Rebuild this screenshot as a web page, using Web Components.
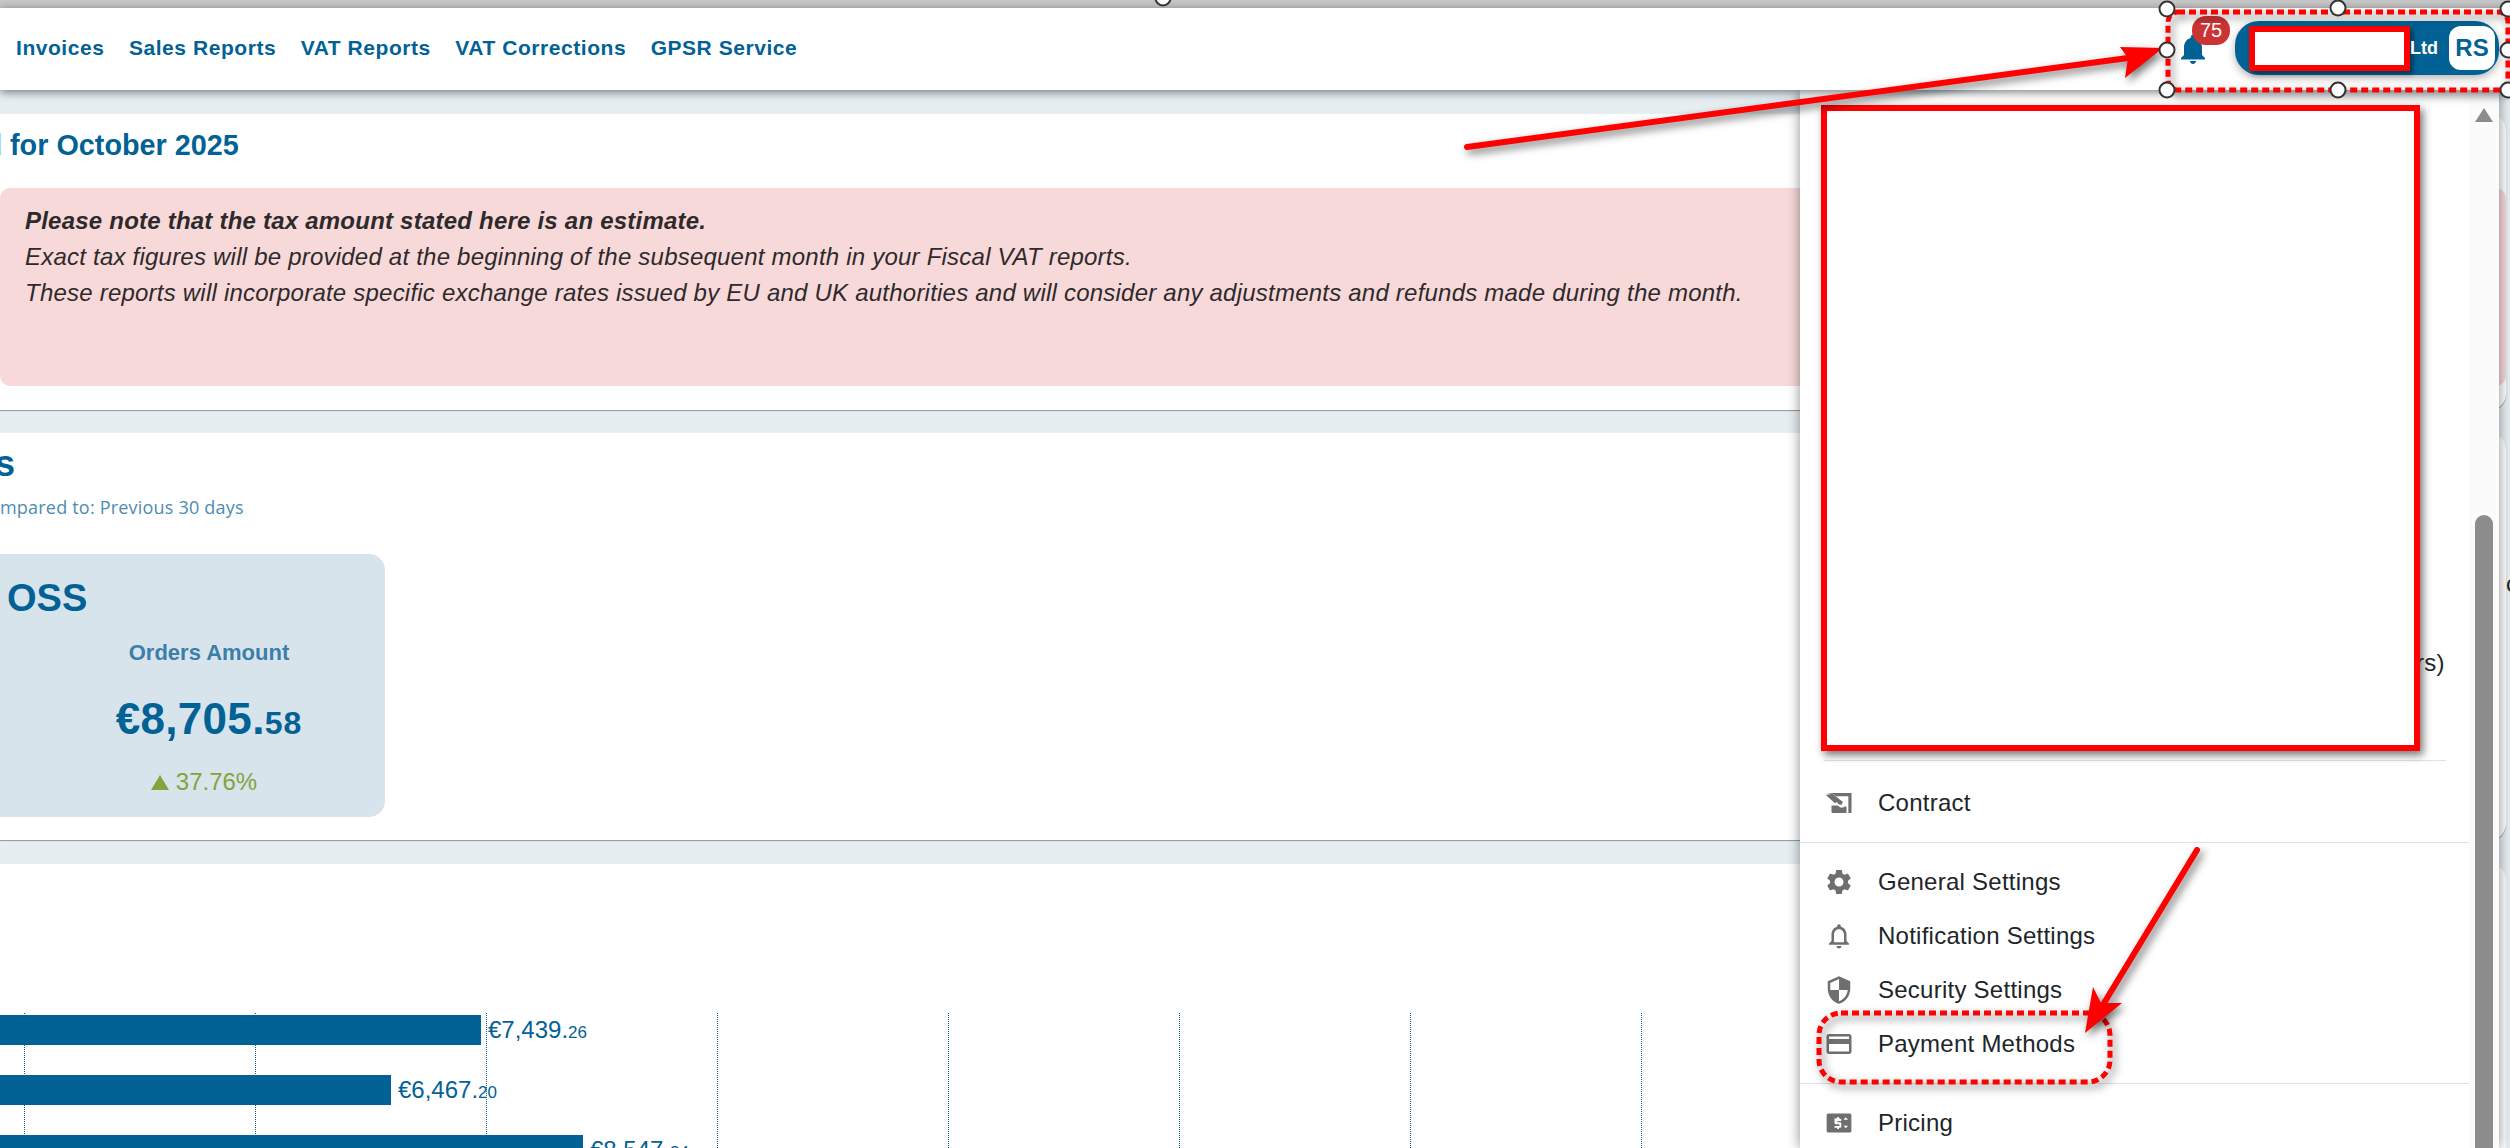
<!DOCTYPE html>
<html lang="en">
<head>
<meta charset="utf-8">
<title>Dashboard</title>
<style>
  html, body { margin: 0; height: 1148px; overflow: hidden; }
  body { position: relative; background: #e6eef2; font-family: "Liberation Sans", Arial, sans-serif; }
  main { display: flex; flex-direction: column; padding: 24px 4px 0 0; }
</style>
</head>
<body>
<top-strip></top-strip>
<app-header>
  <nav-link>Invoices</nav-link>
  <nav-link>Sales Reports</nav-link>
  <nav-link>VAT Reports</nav-link>
  <nav-link>VAT Corrections</nav-link>
  <nav-link>GPSR Service</nav-link>
  <notify-bell slot="right" count="75"></notify-bell>
  <account-pill slot="right" suffix="Ltd" initials="RS"></account-pill>
</app-header>

<main>
  <page-section height="296" gap="23">
    <section-title><span style="margin-left:-15.6px">d</span> for October 2025</section-title>
    <note-box>
      <b>Please note that the tax amount stated here is an estimate.</b>
      <span>Exact tax figures will be provided at the beginning of the subsequent month in your Fiscal VAT reports.</span>
      <span>These reports will incorporate specific exchange rates issued by EU and UK authorities and will consider any adjustments and refunds made during the month.</span>
    </note-box>
  </page-section>

  <page-section height="407" gap="24">
    <section-title><span style="margin-left:-5px;font-size:36px">s</span></section-title>
    <sub-title>mpared to: Previous 30 days</sub-title>
    <stat-card name="OSS" label="Orders Amount" whole="€8,705." cents="58" change="37.76%"></stat-card>
  </page-section>

  <page-section height="284" gap="0" last>
    <bar-chart>
      <bar-row width="481" whole="€7,439." cents="26"></bar-row>
      <bar-row width="391" whole="€6,467." cents="20"></bar-row>
      <bar-row width="583" whole="€8,547." cents="34"></bar-row>
    </bar-chart>
  </page-section>
</main>

<side-menu>
  <menu-group slot="top"><menu-item plain indent="616">rs)</menu-item></menu-group>
  <menu-group>
    <menu-item icon="contract">Contract</menu-item>
  </menu-group>
  <menu-rule></menu-rule>
  <menu-group>
    <menu-item icon="gear">General Settings</menu-item>
    <menu-item icon="bell">Notification Settings</menu-item>
    <menu-item icon="shield">Security Settings</menu-item>
    <menu-item icon="card">Payment Methods</menu-item>
  </menu-group>
  <menu-rule></menu-rule>
  <menu-group>
    <menu-item icon="pricing">Pricing</menu-item>
  </menu-group>
</side-menu>

<markup-layer></markup-layer>

<script>
const BLUE = '#026295';

// material style icons, all on a 24 box
const ICONS = {
  gear: '<path d="M19.14 12.94c.04-.3.06-.61.06-.94 0-.32-.02-.64-.07-.94l2.03-1.58c.18-.14.23-.41.12-.61l-1.92-3.32c-.12-.22-.37-.29-.59-.22l-2.39.96c-.5-.38-1.03-.7-1.62-.94l-.36-2.54c-.04-.24-.24-.41-.48-.41h-3.84c-.24 0-.43.17-.47.41l-.36 2.54c-.59.24-1.13.57-1.62.94l-2.39-.96c-.22-.08-.47 0-.59.22L2.74 8.87c-.12.21-.08.47.12.61l2.03 1.58c-.05.3-.09.63-.09.94s.02.64.07.94l-2.03 1.58c-.18.14-.23.41-.12.61l1.92 3.32c.12.22.37.29.59.22l2.39-.96c.5.38 1.03.7 1.62.94l.36 2.54c.05.24.24.41.48.41h3.84c.24 0 .44-.17.47-.41l.36-2.54c.59-.24 1.13-.56 1.62-.94l2.39.96c.22.08.47 0 .59-.22l1.92-3.32c.12-.22.07-.47-.12-.61l-2.01-1.58zM12 15.6c-1.98 0-3.6-1.62-3.6-3.6s1.62-3.6 3.6-3.6 3.6 1.62 3.6 3.6-1.62 3.6-3.6 3.6z"/>',
  bell: '<path d="M12 22c1.1 0 2-.9 2-2h-4c0 1.1.89 2 2 2zm6-6v-5c0-3.07-1.64-5.64-4.5-6.32V4c0-.83-.67-1.5-1.5-1.5s-1.5.67-1.5 1.5v.68C7.63 5.36 6 7.92 6 11v5l-2 2v1h16v-1l-2-2zm-2 1H8v-6c0-2.48 1.51-4.5 4-4.5s4 2.02 4 4.5v6z"/>',
  shield: '<path d="M12 1L3 5v6c0 5.55 3.84 10.74 9 12 5.16-1.26 9-6.45 9-12V5l-9-4zm0 10.99h7c-.53 4.12-3.28 7.79-7 8.94V12H5V6.3l7-3.11v8.8z"/>',
  card: '<path d="M20 4H4c-1.11 0-1.99.89-1.99 2L2 18c0 1.11.89 2 2 2h16c1.11 0 2-.89 2-2V6c0-1.11-.89-2-2-2zm0 14H4v-6h16v6zm0-10H4V6h16v2z"/>',
  contract: '<path d="M1.500 4H22v15.200a.8.8 0 0 1-.8.8h-1.700V6.500H9.500L7.500 4.800z"/><path d="M1.500 5.500L6.800 4.500l8.400 6.600-1.300 2.400-2.400-.6-1-1.500-2 .6z"/><path d="M6 14h5l2 1.500h2.500l1-1 1.500.5v5H6.800a.8.8 0 0 1-.8-.8z"/>',
  pricing: '<g transform="translate(12 12) scale(.9 .85) translate(-12 -12)"><path fill-rule="evenodd" d="M2.500 3h19A1.500 1.500 0 0 1 23 4.500v15a1.500 1.500 0 0 1-1.500 1.500h-19A1.500 1.500 0 0 1 1 19.500v-15A1.500 1.500 0 0 1 2.500 3zM14 8.500v1.600h-3.400v1.100H13a1 1 0 0 1 1 1v3.300a1 1 0 0 1-1 1h-1v1.200h-1.600v-1.200H8v-1.600h4.400V13.100H9a1 1 0 0 1-1-1V8.500a1 1 0 0 1 1-1h1.400V6.300H12v1.200zM16 9h4l-2-2.500zM16 14.500h4L18 17z"/></g>'
};

class TopStrip extends HTMLElement {
  constructor() {
    super();
    this.attachShadow({ mode: 'open' }).innerHTML = `<style>:host { display: block; height: 8px; background: #c8c8c8; }</style>`;
  }
}

class AppHeader extends HTMLElement {
  constructor() {
    super();
    this.attachShadow({ mode: 'open' }).innerHTML = `
      <style>
        :host { display: flex; align-items: center; position: relative; z-index: 3; height: 82px; padding: 0 11px 0 16px; background: #fff; box-shadow: 0 2px 9px rgba(40,50,60,.65); }
        nav { display: flex; gap: 24.500px; margin-top: -2px; }
        .right { display: flex; align-items: center; gap: 24px; margin-left: auto; }
      </style>
      <nav><slot></slot></nav>
      <div class="right"><slot name="right"></slot></div>`;
  }
}

class NavLink extends HTMLElement {
  constructor() {
    super();
    this.attachShadow({ mode: 'open' }).innerHTML = `
      <style>:host { display: block; font: bold 21px "Liberation Sans", Arial, sans-serif; letter-spacing: .55px; color: ${BLUE}; }</style>
      <slot></slot>`;
  }
}

class NotifyBell extends HTMLElement {
  connectedCallback() {
    this.attachShadow({ mode: 'open' }).innerHTML = `
      <style>
        :host { display: block; position: relative; width: 36px; height: 36px; }
        svg { display: block; fill: ${BLUE}; }
        .badge { position: absolute; left: 17px; top: -15px; width: 38px; height: 29px; border-radius: 14px; background: #cc3333; color: #fff; font: 20px/29px "Liberation Sans", Arial, sans-serif; text-align: center; }
      </style>
      <svg width="36" height="36" viewBox="0 0 24 24"><path d="M12 22c1.100 0 2-.9 2-2h-4c0 1.100.89 2 2 2zm6-6v-5c0-3.070-1.640-5.640-4.500-6.320V4c0-.83-.67-1.500-1.500-1.500s-1.500.67-1.500 1.500v.68C7.630 5.360 6 7.920 6 11v5l-2 2v1h16v-1l-2-2z"/></svg>
      <span class="badge">${this.getAttribute('count')}</span>`;
  }
}

class AccountPill extends HTMLElement {
  connectedCallback() {
    this.attachShadow({ mode: 'open' }).innerHTML = `
      <style>
        :host { display: flex; align-items: center; box-sizing: border-box; width: 264px; height: 54px; margin-top: -2px; padding: 0 4px 0 14px; border-radius: 24px; background: ${BLUE}; box-shadow: 0 3px 8px rgba(0,0,0,.3); font-family: "Liberation Sans", Arial, sans-serif; }
        .hidden { box-sizing: border-box; width: 161px; height: 45px; border: 6px solid #f00; background: #fff; box-shadow: 3px 3px 5px rgba(0,0,0,.45); }
        .name { color: #fff; font-weight: bold; font-size: 18px; }
        .badge { width: 46px; height: 44px; margin-left: auto; border-radius: 12px; background: #fff; color: ${BLUE}; font-weight: bold; font-size: 24px; line-height: 44px; text-align: center; }
      </style>
      <div class="hidden"></div>
      <span class="name">${this.getAttribute('suffix')}</span>
      <span class="badge">${this.getAttribute('initials')}</span>`;
  }
}

class PageSection extends HTMLElement {
  connectedCallback() {
    this.attachShadow({ mode: 'open' }).innerHTML = `
      <style>
        :host { display: block; box-sizing: border-box; flex: none; height: ${this.getAttribute('height')}px; margin-bottom: ${this.getAttribute('gap')}px; padding-top: 14px; background: #fff; border-radius: 0 16px 16px 0; box-shadow: 0 1px 1px #8f9699; overflow: hidden; }
        :host([last]) { border-radius: 0 16px 0 0; box-shadow: none; }
      </style>
      <slot></slot>`;
  }
}

class SectionTitle extends HTMLElement {
  constructor() {
    super();
    this.attachShadow({ mode: 'open' }).innerHTML = `
      <style>:host { display: block; font: bold 28.8px/34px "Liberation Sans", Arial, sans-serif; color: ${BLUE}; }</style>
      <slot></slot>`;
  }
}

class SubTitle extends HTMLElement {
  constructor() {
    super();
    this.attachShadow({ mode: 'open' }).innerHTML = `
      <style>:host { display: block; margin-top: 11px; font: 18px/26px "Open Sans", sans-serif; letter-spacing: .2px; color: #4d8cb3; }</style>
      <slot></slot>`;
  }
}

class NoteBox extends HTMLElement {
  constructor() {
    super();
    this.attachShadow({ mode: 'open' }).innerHTML = `
      <style>
        :host { display: flex; flex-direction: column; box-sizing: border-box; height: 198px; margin-top: 26px; padding: 15px 25px; border-radius: 10px; background: #f8d9da; color: #2e2a2b; font: italic 24px/36px "Liberation Sans", Arial, sans-serif; letter-spacing: .22px; }
      </style>
      <slot></slot>`;
  }
}

class StatCard extends HTMLElement {
  connectedCallback() {
    const a = n => this.getAttribute(n);
    this.attachShadow({ mode: 'open' }).innerHTML = `
      <style>
        :host { display: block; box-sizing: border-box; width: 385px; height: 263px; margin-top: 34px; padding: 22px 0 0 7px; border-radius: 0 16px 16px 0; background: #d8e4ec; font-family: "Liberation Sans", Arial, sans-serif; color: ${BLUE}; }
        h3 { margin: 0; font-size: 38px; line-height: 44px; }
        .col { display: flex; flex-direction: column; align-items: center; padding-left: 26px; }
        .label { margin-top: 19px; font-weight: bold; font-size: 22px; line-height: 28px; color: #3a7ea9; }
        .amount { margin-top: 22px; font-weight: bold; font-size: 44px; line-height: 60px; letter-spacing: .3px; }
        .amount small { font-size: 32px; letter-spacing: 1px; }
        .change { display: flex; align-items: center; gap: 7px; margin: 14px 10px 0 0; font-size: 24px; line-height: 30px; color: #84a33c; }
        .up { width: 0; height: 0; border: solid transparent; border-width: 0 9px 15px; border-bottom-color: #84a33c; }
      </style>
      <h3>${a('name')}</h3>
      <div class="col">
        <div class="label">${a('label')}</div>
        <div class="amount">${a('whole')}<small>${a('cents')}</small></div>
        <div class="change"><i class="up"></i>${a('change')}</div>
      </div>`;
  }
}

class BarChart extends HTMLElement {
  constructor() {
    super();
    const lines = Array.from({ length: 8 }, () => '<i></i>').join('');
    this.attachShadow({ mode: 'open' }).innerHTML = `
      <style>
        :host { display: block; position: relative; margin-top: 135px; padding-top: 2px; }
        .grid { position: absolute; left: 24px; top: 0; display: flex; height: 135px; }
        .grid i { width: 231px; border-left: 1px dotted ${BLUE}; box-sizing: border-box; }
        .rows { position: relative; display: flex; flex-direction: column; gap: 30px; }
      </style>
      <div class="grid">${lines}</div>
      <div class="rows"><slot></slot></div>`;
  }
}

class BarRow extends HTMLElement {
  connectedCallback() {
    this.attachShadow({ mode: 'open' }).innerHTML = `
      <style>
        :host { display: flex; align-items: center; gap: 7px; height: 30px; font: 24px/30px "Liberation Sans", Arial, sans-serif; color: ${BLUE}; }
        .bar { flex: none; width: ${this.getAttribute('width')}px; height: 30px; background: ${BLUE}; }
        span { padding-top: 3px; }
        small { font-size: 17px; }
      </style>
      <div class="bar"></div><span>${this.getAttribute('whole')}<small>${this.getAttribute('cents')}</small></span>`;
  }
}

class SideMenu extends HTMLElement {
  constructor() {
    super();
    this.attachShadow({ mode: 'open' }).innerHTML = `
      <style>
        :host { display: flex; position: absolute; z-index: 2; left: 1800px; top: 90px; width: 699px; height: 1058px; background: #fff; box-shadow: 0 0 12px rgba(0,0,0,.45); overflow: hidden; }
        .list { display: flex; flex-direction: column; flex: 1; }
        .top { height: 670px; flex: none; display: flex; flex-direction: column; justify-content: flex-end; padding-bottom: 58px; box-sizing: border-box; }
        .rule { height: 1px; margin: 0 23px 3px 24px; background: #e2e2e2; flex: none; }
        .bar { position: relative; width: 30px; background: #fbfbfb; }
        .up { position: absolute; left: 6px; top: 18px; width: 0; height: 0; border: solid transparent; border-width: 0 9px 14px; border-bottom-color: #8c8c8c; }
        .thumb { position: absolute; left: 6px; top: 425px; bottom: 0; width: 18px; border-radius: 9px 9px 0 0; background: #8c8c8c; }
      </style>
      <div class="list">
        <div class="top"><slot name="top"></slot></div>
        <div class="rule"></div>
        <slot></slot>
      </div>
      <div class="bar"><i class="up"></i><i class="thumb"></i></div>`;
  }
}

class MenuGroup extends HTMLElement {
  constructor() {
    super();
    this.attachShadow({ mode: 'open' }).innerHTML = `
      <style>:host { display: block; flex: none; padding: 12px 0; }</style><slot></slot>`;
  }
}

class MenuRule extends HTMLElement {
  constructor() {
    super();
    this.attachShadow({ mode: 'open' }).innerHTML = `
      <style>:host { display: block; flex: none; height: 1px; background: #e0e0e0; }</style>`;
  }
}

class MenuItem extends HTMLElement {
  connectedCallback() {
    const icon = this.getAttribute('icon');
    const indent = this.getAttribute('indent') || 24;
    this.attachShadow({ mode: 'open' }).innerHTML = `
      <style>
        :host { display: flex; align-items: center; gap: 24px; height: 54px; padding-left: ${indent}px; font: 24px/30px "Liberation Sans", Arial, sans-serif; letter-spacing: .25px; color: #212529; }
        svg { display: block; flex: none; width: 30px; height: 30px; fill: #6f6f6f; }
      </style>
      ${icon ? `<svg viewBox="0 0 24 24">${ICONS[icon]}</svg>` : ''}<slot></slot>`;
  }
}

class MarkupLayer extends HTMLElement {
  constructor() {
    super();
    const handles = [[1163, -2], [2167, 9], [2338, 8], [2508, 9], [2167, 50], [2508, 50], [2167, 90], [2338, 90], [2508, 90]]
      .map(([x, y]) => `<circle cx="${x}" cy="${y}" r="7.500"/>`).join('');
    this.attachShadow({ mode: 'open' }).innerHTML = `
      <style>
        :host { display: block; position: absolute; z-index: 4; left: 0; top: 0; width: 2510px; height: 1148px; pointer-events: none; }
        svg { display: block; }
        .red { filter: drop-shadow(3px 4px 4px rgba(0,0,0,.55)); }
        .dots { fill: none; stroke: #f00; stroke-width: 5; stroke-dasharray: 7 4; }
        .handles circle { fill: #fff; stroke: #333; stroke-width: 2; }
        text { font: 24px "Liberation Sans", Arial, sans-serif; fill: #222; }
      </style>
      <svg width="2510" height="1148">
        <text x="2506" y="592">c</text>
        <g class="red">
          <rect x="1824" y="108" width="593" height="640" fill="#fff" stroke="#f00" stroke-width="6"/>
        </g>
        <g class="red">
          <rect class="dots" x="2168" y="12" width="340" height="78" rx="10"/>
          <rect class="dots" x="1819" y="1013" width="291" height="69" rx="22"/>
        </g>
        <g class="red">
          <path d="M1467 147L2128 58" stroke="#f00" stroke-width="6" stroke-linecap="round"/>
          <path d="M2163 48L2120 47 2128 58 2125 78z" fill="#f00"/>
        </g>
        <g class="red">
          <path d="M2197 850L2101 1008" stroke="#f00" stroke-width="6" stroke-linecap="round"/>
          <path d="M2085 1033L2093 987 2101 1003 2122 1003z" fill="#f00"/>
        </g>
        <g class="handles">${handles}</g>
      </svg>`;
  }
}

customElements.define('top-strip', TopStrip);
customElements.define('app-header', AppHeader);
customElements.define('nav-link', NavLink);
customElements.define('notify-bell', NotifyBell);
customElements.define('account-pill', AccountPill);
customElements.define('page-section', PageSection);
customElements.define('section-title', SectionTitle);
customElements.define('sub-title', SubTitle);
customElements.define('note-box', NoteBox);
customElements.define('stat-card', StatCard);
customElements.define('bar-chart', BarChart);
customElements.define('bar-row', BarRow);
customElements.define('side-menu', SideMenu);
customElements.define('menu-group', MenuGroup);
customElements.define('menu-rule', MenuRule);
customElements.define('menu-item', MenuItem);
customElements.define('markup-layer', MarkupLayer);
</script>
</body>
</html>
